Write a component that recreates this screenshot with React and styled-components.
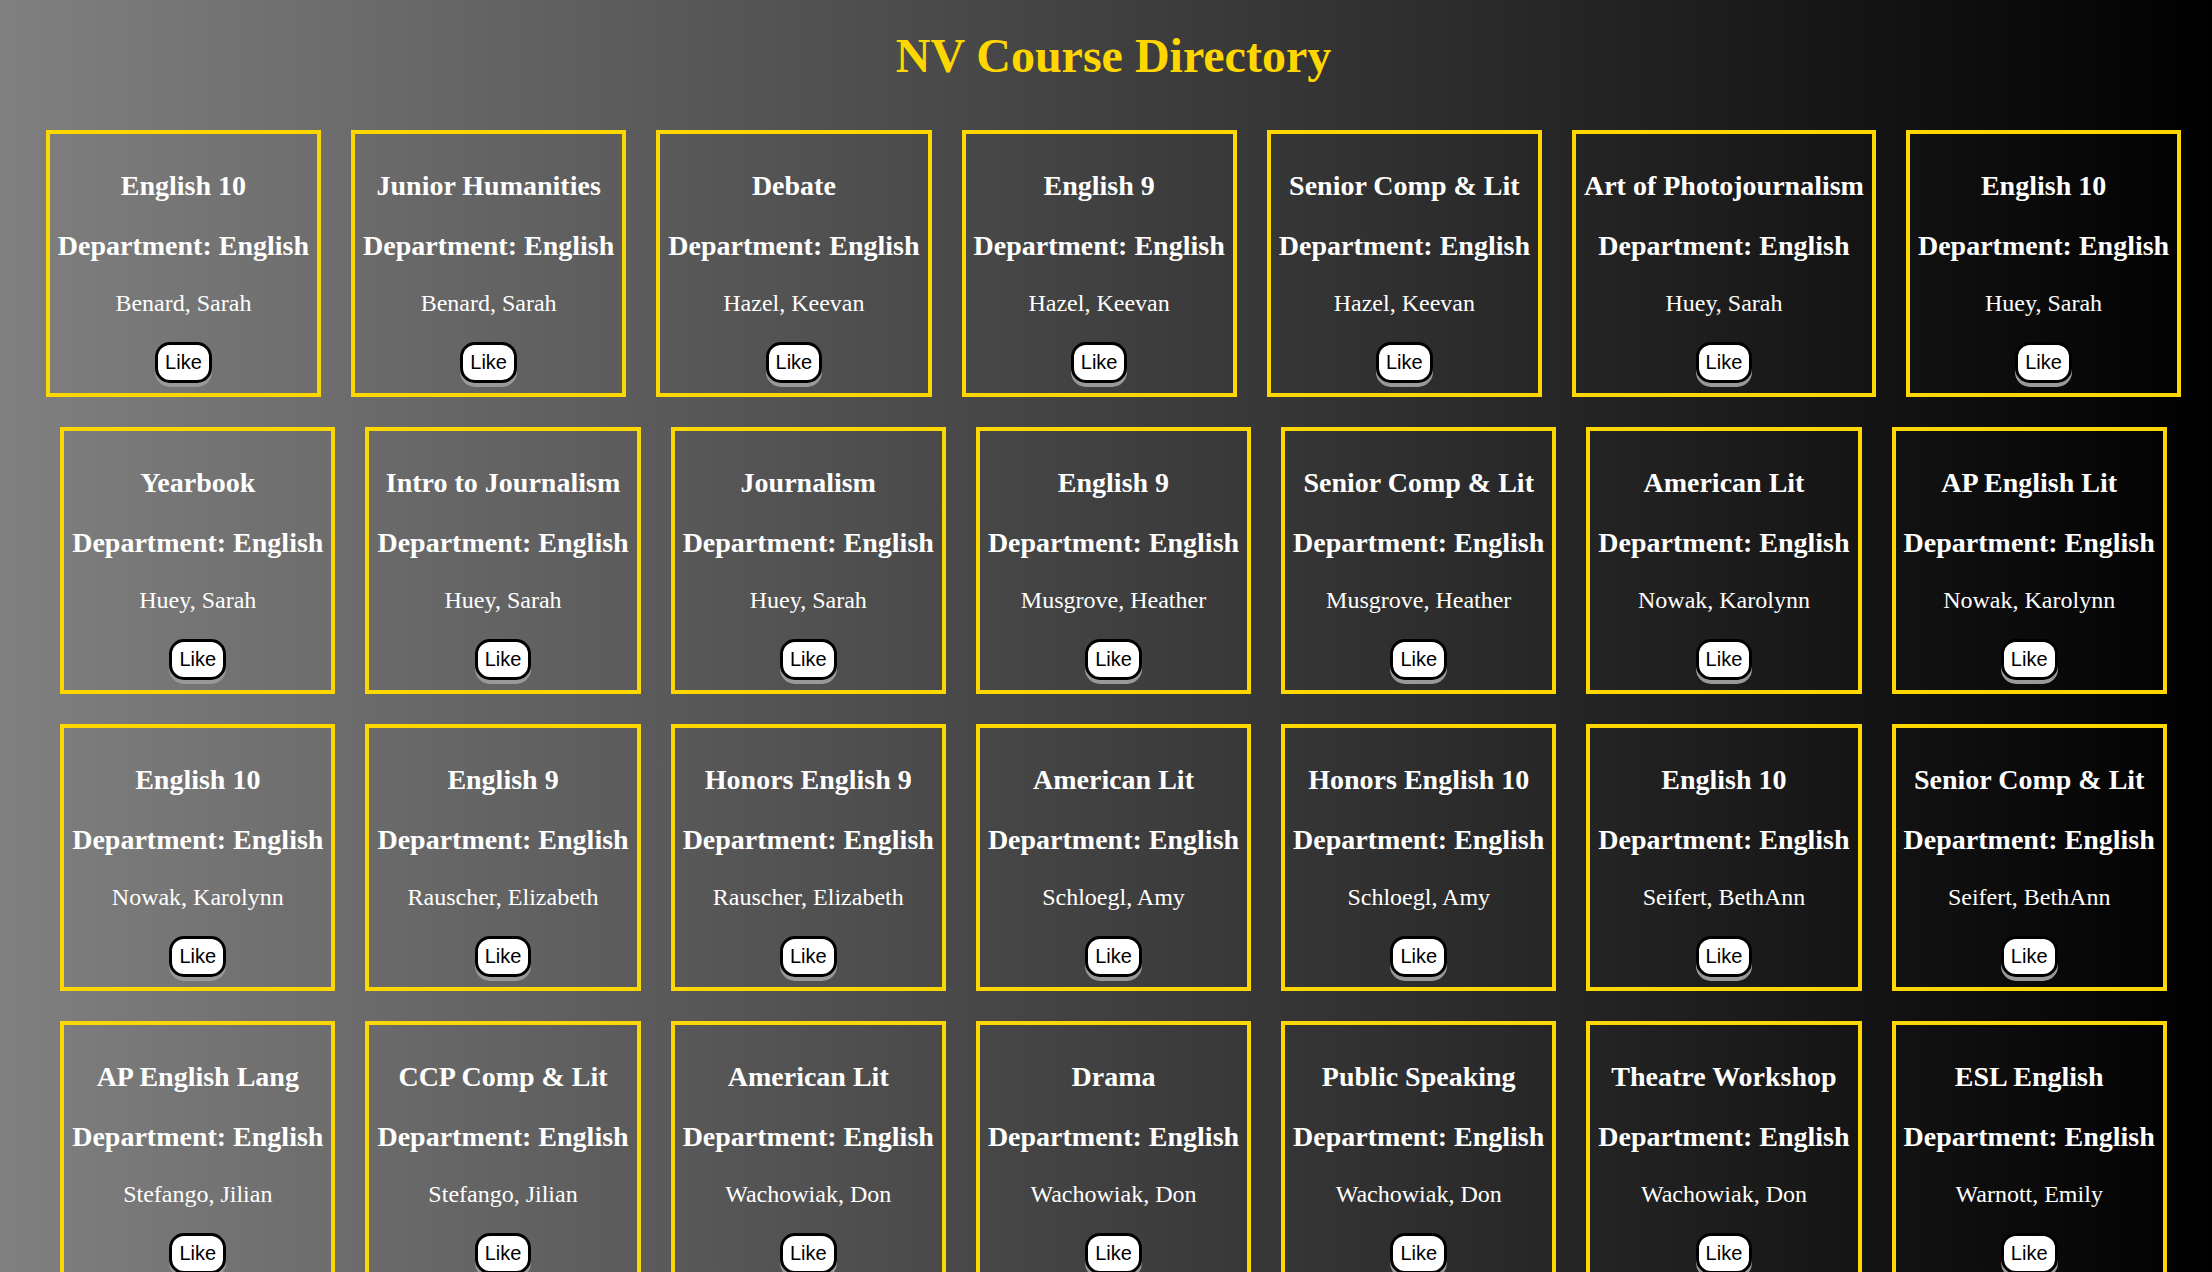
import React from 'react'
import styled, { createGlobalStyle } from 'styled-components'

const courses = [
    ['English 10', 'Benard, Sarah'],
    ['Junior Humanities', 'Benard, Sarah'],
    ['Debate', 'Hazel, Keevan'],
    ['English 9', 'Hazel, Keevan'],
    ['Senior Comp & Lit', 'Hazel, Keevan'],
    ['Art of Photojournalism', 'Huey, Sarah'],
    ['English 10', 'Huey, Sarah'],
    ['Yearbook', 'Huey, Sarah'],
    ['Intro to Journalism', 'Huey, Sarah'],
    ['Journalism', 'Huey, Sarah'],
    ['English 9', 'Musgrove, Heather'],
    ['Senior Comp & Lit', 'Musgrove, Heather'],
    ['American Lit', 'Nowak, Karolynn'],
    ['AP English Lit', 'Nowak, Karolynn'],
    ['English 10', 'Nowak, Karolynn'],
    ['English 9', 'Rauscher, Elizabeth'],
    ['Honors English 9', 'Rauscher, Elizabeth'],
    ['American Lit', 'Schloegl, Amy'],
    ['Honors English 10', 'Schloegl, Amy'],
    ['English 10', 'Seifert, BethAnn'],
    ['Senior Comp & Lit', 'Seifert, BethAnn'],
    ['AP English Lang', 'Stefango, Jilian'],
    ['CCP Comp & Lit', 'Stefango, Jilian'],
    ['American Lit', 'Wachowiak, Don'],
    ['Drama', 'Wachowiak, Don'],
    ['Public Speaking', 'Wachowiak, Don'],
    ['Theatre Workshop', 'Wachowiak, Don'],
    ['ESL English', 'Warnott, Emily'],
]

const GlobalStyle = createGlobalStyle`
    * { box-sizing: border-box; }
    body {
        margin: 0;
        font-family: "Liberation Serif", "Times New Roman", serif;
    }
`

export default function App() {
    return (
        <Page>
            <GlobalStyle />
            <Title>NV Course Directory</Title>
            <Grid>
                {courses.map(([name, teacher], i) => (
                    <Card key={i}>
                        <CourseName>{name}</CourseName>
                        <Department>Department: English</Department>
                        <Teacher>{teacher}</Teacher>
                        <LikeButton>Like</LikeButton>
                    </Card>
                ))}
            </Grid>
        </Page>
    )
}

const Page = styled.main`
    min-height: 100vh;
    background: linear-gradient(to right, #808080, #000);
    padding: 28px 0 40px 15px;
`
const Title = styled.h1`
    margin: 0;
    font-size: 48px;
    font-weight: 700;
    color: #ffd700;
    text-align: center;
    line-height: normal;
`
const Grid = styled.section`
    margin-top: 47px;
    display: flex;
    flex-wrap: wrap;
    justify-content: center;
    gap: 30px;
`
const Card = styled.div`
    display: flex;
    flex-direction: column;
    align-items: center;
    border: 4px solid #ffd700;
    padding: 36px 8px 10px;
    color: #fff;
    text-align: center;
`
const CourseName = styled.h3`
    margin: 0 0 28px;
    font-size: 28px;
    font-weight: 700;
    line-height: normal;
    white-space: nowrap;
`
const Department = styled(CourseName)`
    margin-bottom: 28px;
`
const Teacher = styled.p`
    margin: 0 0 25px;
    font-size: 24px;
    line-height: normal;
    white-space: nowrap;
`
const LikeButton = styled.button`
    font-family: "Liberation Sans", Arial, sans-serif;
    font-size: 20px;
    line-height: normal;
    color: #000;
    background: #fff;
    border: 3px solid #000;
    border-radius: 15px;
    padding: 6px 7px;
    box-shadow: 0 4px 0 #999;
    cursor: pointer;
`
